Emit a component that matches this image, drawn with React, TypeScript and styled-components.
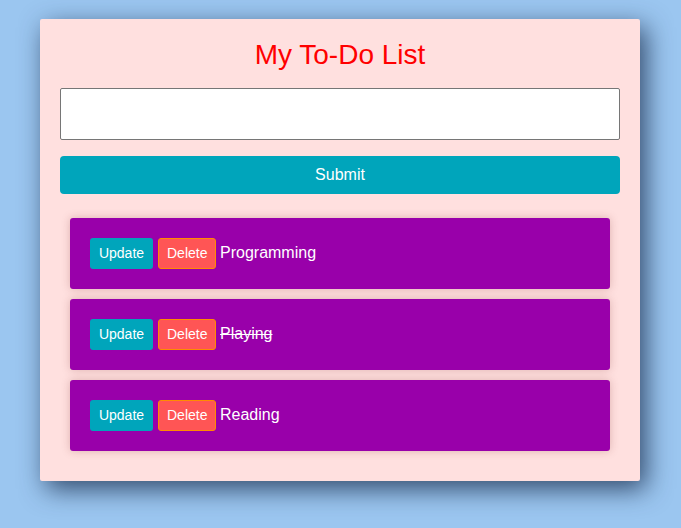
import React, { useState } from "react";
import styled, { createGlobalStyle } from "styled-components";

const Global = createGlobalStyle`
  html, body { margin: 0; padding: 0; }
  body {
    background: #9bc6f0;
    font-family: "Liberation Sans", Arial, sans-serif;
    min-height: 528px;
  }
`;

const Page = styled.div`
  display: flex;
  justify-content: flex-start;
  padding: 19px 0 0 40px;
`;

const Card = styled.div`
  width: 600px;
  box-sizing: border-box;
  padding: 20px 20px 20px;
  background: #ffe0df;
  border-radius: 2px;
  box-shadow: 6px 8px 26px rgba(20, 40, 70, 0.78);
  display: flex;
  flex-direction: column;
`;

const Title = styled.h1`
  margin: 0 0 17px;
  font-size: 28px;
  line-height: 32px;
  font-weight: normal;
  color: #ff0000;
  text-align: center;
`;

const Input = styled.input`
  box-sizing: border-box;
  width: 100%;
  height: 52px;
  border: 1px solid #767676;
  border-radius: 2px;
  background: #fff;
  margin: 0 0 16px;
  font-size: 16px;
  padding: 0 8px;
`;

const Submit = styled.button`
  height: 38px;
  width: 100%;
  border: none;
  border-radius: 4px;
  background: #00a5bb;
  color: #fff;
  font-family: "Liberation Sans", Arial, sans-serif;
  font-size: 16px;
  cursor: pointer;
`;

const List = styled.ul`
  list-style: none;
  margin: 24px 10px 10px;
  padding: 0;
  display: flex;
  flex-direction: column;
  gap: 10px;
`;

const Item = styled.li`
  background: #9900aa;
  border-radius: 3px;
  padding: 20px;
  display: flex;
  align-items: center;
  box-shadow: 0 0 8px rgba(120, 40, 40, 0.25);
`;

const SmallButton = styled.button<{ $variant: "update" | "delete" }>`
  box-sizing: border-box;
  height: 31px;
  padding: 0 8px 1px;
  font-family: "Liberation Sans", Arial, sans-serif;
  font-size: 14px;
  color: #fff;
  border-radius: 3px;
  cursor: pointer;
  margin-right: ${(p) => (p.$variant === "update" ? "5px" : "4px")};
  background: ${(p) => (p.$variant === "update" ? "#00a5bb" : "#ff5555")};
  border: ${(p) => (p.$variant === "update" ? "none" : "1px solid #ff8c00")};
  width: ${(p) => (p.$variant === "update" ? "63px" : "58px")};
`;

const Label = styled.span<{ $done?: boolean }>`
  color: #fff;
  font-size: 16px;
  line-height: 18px;
  margin-bottom: 2px;
  text-decoration: ${(p) => (p.$done ? "line-through" : "none")};
`;

const initial = [
  { text: "Programming", done: false },
  { text: "Playing", done: true },
  { text: "Reading", done: false },
];

export default function App() {
  const [value, setValue] = useState("");
  const [items] = useState(initial);
  return (
    <>
      <Global />
      <Page>
        <Card>
          <Title>My To-Do List</Title>
          <Input value={value} onChange={(e) => setValue(e.target.value)} />
          <Submit>Submit</Submit>
          <List>
            {items.map((it) => (
              <Item key={it.text}>
                <SmallButton $variant="update">Update</SmallButton>
                <SmallButton $variant="delete">Delete</SmallButton>
                <Label $done={it.done}>{it.text}</Label>
              </Item>
            ))}
          </List>
        </Card>
      </Page>
    </>
  );
}
